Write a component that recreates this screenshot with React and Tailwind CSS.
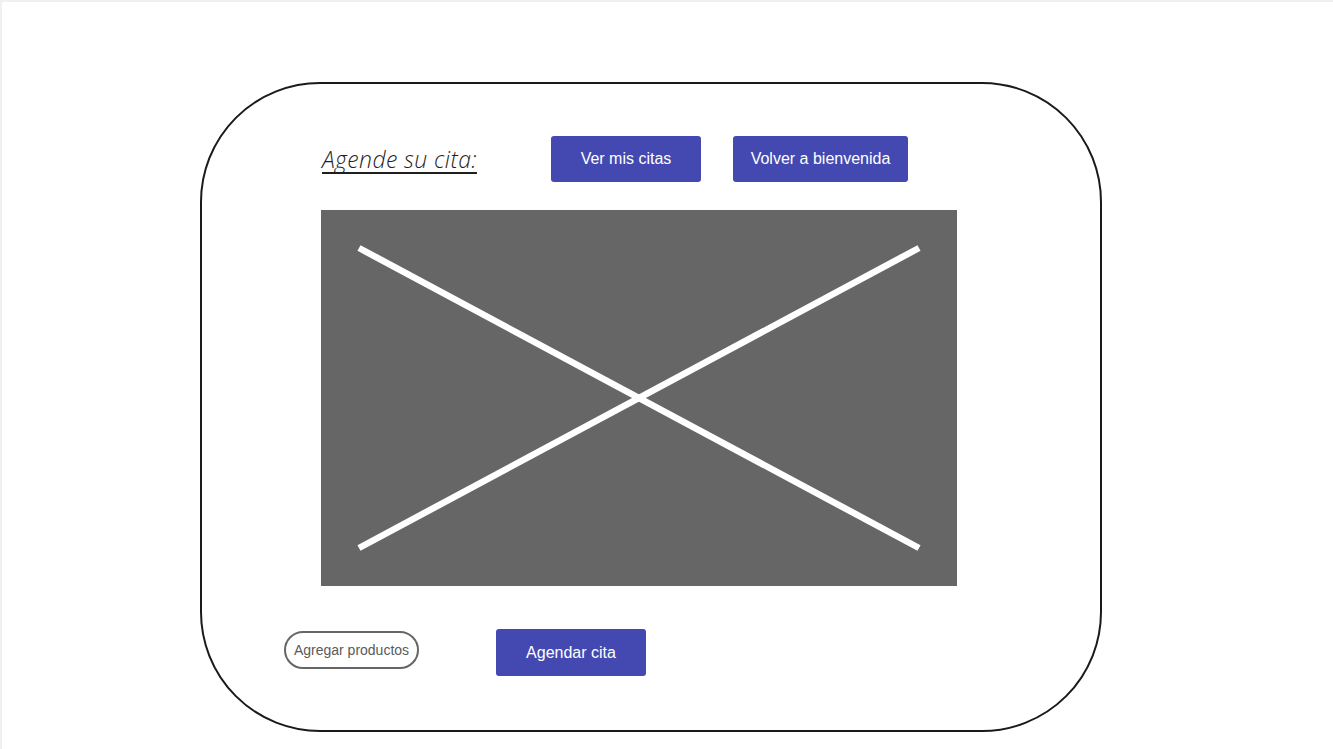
import React from "react";

export default function App() {
  return (
    <div className="w-[1333px] h-[749px] bg-white border-t-2 border-l-2 border-[#f0f0f0] overflow-hidden">
      <div className="ml-[198px] mt-[80px] w-[902px] h-[650px] border-2 border-[#1a1a1a] rounded-[120px] flex flex-col">
        <div className="flex items-center pl-[120px] pt-[52px]">
          <div className="w-[229px]">
            <span
              className="italic font-light text-[23px] tracking-[0.4px] text-[#1f1f1f] underline decoration-2 underline-offset-[4px] [text-decoration-skip-ink:none]"
              style={{ fontFamily: '"Open Sans", sans-serif' }}
            >
              Agende su cita:
            </span>
          </div>
          <button
            className="w-[150px] h-[46px] rounded-[3px] bg-[#4349b1] text-white text-[16px]"
            style={{ fontFamily: '"Liberation Sans", Arial, sans-serif' }}
          >
            Ver mis citas
          </button>
          <button
            className="ml-[32px] w-[175px] h-[46px] rounded-[3px] bg-[#4349b1] text-white text-[16px]"
            style={{ fontFamily: '"Liberation Sans", Arial, sans-serif' }}
          >
            Volver a bienvenida
          </button>
        </div>
        <div className="ml-[119px] mt-[28px] w-[636px] h-[376px] bg-[#666666]">
          <svg width="636" height="376" viewBox="0 0 636 376">
            <line x1="38" y1="38" x2="598" y2="338" stroke="#ffffff" strokeWidth="6.5" />
            <line x1="598" y1="38" x2="38" y2="338" stroke="#ffffff" strokeWidth="6.5" />
          </svg>
        </div>
        <div className="flex items-start pl-[82px] mt-[43px]">
          <div
            className="mt-[2px] w-[135px] h-[38px] rounded-full border-2 border-[#666666] flex items-center justify-center text-[14px] text-[#5a5a5a]"
            style={{ fontFamily: '"Liberation Sans", Arial, sans-serif' }}
          >
            Agregar productos
          </div>
          <button
            className="ml-[77px] w-[150px] h-[47px] rounded-[3px] bg-[#4349b1] text-white text-[16px]"
            style={{ fontFamily: '"Liberation Sans", Arial, sans-serif' }}
          >
            Agendar cita
          </button>
        </div>
      </div>
    </div>
  );
}
